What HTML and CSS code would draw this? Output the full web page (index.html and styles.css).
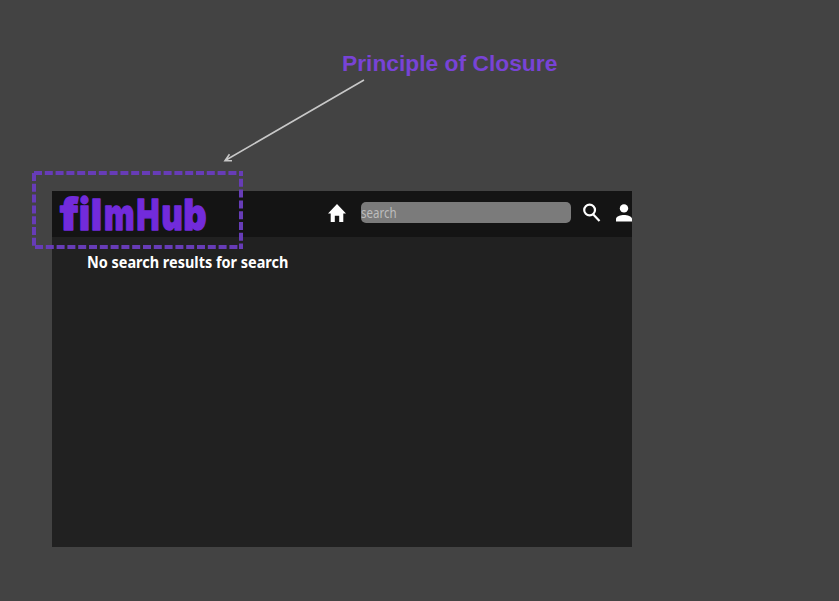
FILE: index.html
```html
<!DOCTYPE html>
<html lang="en">
<head>
<meta charset="utf-8">
<title>FilmHub</title>
<link rel="stylesheet" href="styles.css">
</head>
<body>
<h1 class="caption">Principle of Closure</h1>
<main class="app">
  <header class="bar">
    <svg class="logo" width="160" height="60" viewBox="0 -6 160 60"><text y="39.2"><tspan x="8" textLength="18.500" lengthAdjust="spacingAndGlyphs">f</tspan><tspan x="27" textLength="11" lengthAdjust="spacingAndGlyphs">i</tspan><tspan x="39" textLength="11" lengthAdjust="spacingAndGlyphs">l</tspan><tspan x="52" textLength="30.500" lengthAdjust="spacingAndGlyphs">m</tspan><tspan x="84.500" textLength="23" lengthAdjust="spacingAndGlyphs">H</tspan><tspan x="109.500" textLength="21.200" lengthAdjust="spacingAndGlyphs">u</tspan><tspan x="131.500" textLength="23" lengthAdjust="spacingAndGlyphs">b</tspan></text></svg>
    <nav class="tools">
      <svg class="home" width="18" height="18" viewBox="0 0 18 18"><path d="M9 0 0 9.400h2.700V18h4.100v-6.200h4.400V18h4.100V9.400H18z"/></svg>
      <div class="search"><span>search</span></div>
      <svg class="find" width="18" height="20" viewBox="0 0 18 20"><circle cx="6.600" cy="7" r="5.400"/><path d="m10.300 11.600 6.200 6.400"/></svg>
      <svg class="user" width="16" height="18" viewBox="0 0 16 18"><circle cx="8" cy="4.400" r="4.200"/><path d="M0 17.500v-2.600C0 12.300 4.800 11 8 11s8 1.300 8 3.900v2.600z"/></svg>
    </nav>
  </header>
  <p class="empty"><span>No search results for search</span></p>
</main>
<svg class="notes" width="839" height="601" viewBox="0 0 839 601">
  <path class="arrow" d="M364 80 226 160M229.500 154.300 225 160.600 232 160.700"/>
  <g class="frame">
    <path d="M34 173H243"/>
    <path d="M35 247H243"/>
    <path d="M34 173V247"/>
    <path d="M241 171V249" stroke-dashoffset="3"/>
  </g>
</svg>
</body>
</html>
```
FILE: styles.css
```css
* { box-sizing: border-box; }
body {
  margin: 0;
  height: 601px;
  overflow: hidden;
  position: relative;
  background: #434343;
  font-family: "Noto Sans", sans-serif;
}
.caption {
  margin: 0;
  padding: 49px 0 0 342px;
  height: 191px;
  font: bold 22.8px/28px "Liberation Sans", sans-serif;
  color: #7843d6;
  white-space: nowrap;
}
.app {
  display: flow-root;
  width: 580px;
  height: 356px;
  margin-left: 52px;
  background: #212121;
}
.bar {
  display: flex;
  justify-content: space-between;
  height: 46px;
  background: #141414;
}
.logo { margin-top: -6px; overflow: visible; }
.logo text {
  font: 900 43px Inter, sans-serif;
  fill: #722bdb;
  stroke: #722bdb;
  stroke-width: 1.3;
  stroke-linejoin: round;
}
.tools { display: flex; align-items: center; margin-top: -2px; fill: #fff; }
.home { margin-right: 15px; }
.search {
  width: 210px;
  height: 21px;
  margin: 0 12px 1px 0;
  border-radius: 5px;
  background: #7b7b7b;
  color: #bdbdbd;
  font-size: 14px;
  line-height: 21px;
}
.search span, .empty span { display: inline-block; transform-origin: 0 50%; }
.search span { transform: scaleX(.82); }
.find { margin-right: 15px; fill: none; stroke: #fff; stroke-width: 2.2; }
.empty {
  margin: 13px 0 0 35px;
  font-size: 16.500px;
  font-weight: 700;
  line-height: 24px;
  color: #fff;
  white-space: nowrap;
}
.empty span { transform: scaleX(.876); }
.notes { position: absolute; inset: 0; pointer-events: none; fill: none; }
.arrow { stroke: #c8c8c8; stroke-width: 1.6; }
.frame { stroke: #673cb7; stroke-width: 4; stroke-dasharray: 8 2.800; }
```
